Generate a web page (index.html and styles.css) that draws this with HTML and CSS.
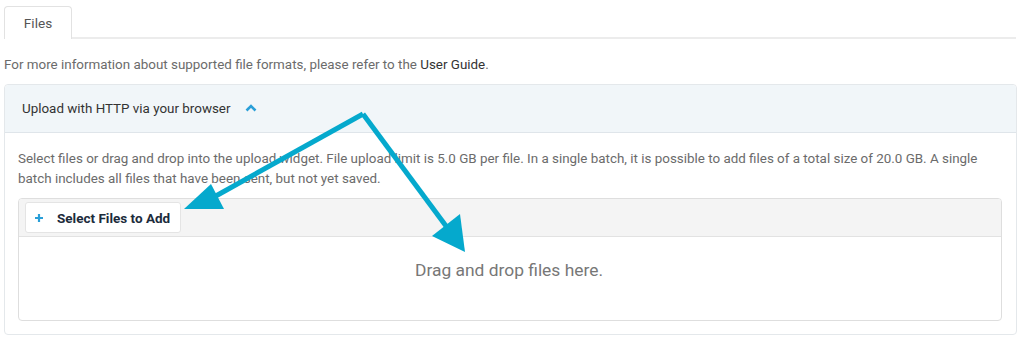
FILE: index.html
```html
<!DOCTYPE html>
<html lang="en">
    <head>
        <meta charset="UTF-8">
        <meta name="viewport" content="width=device-width, initial-scale=1.0">
        <title>Files</title>
        <link rel="stylesheet" href="styles.css">
    </head>
    <body>

        <!-- Tabs -->
        <ul class="tabs">
            <li class="tab active">Files</li>
        </ul>

        <p class="info">For more information about supported file formats, please refer to the <a href="#" class="guide-link">User Guide</a>.</p>

        <!-- Upload panel -->
        <div class="panel">
            <div class="panel-header">
                <span>Upload with HTTP via your browser</span>
                <svg class="chevron" width="12" height="8" viewBox="0 0 12 8">
                    <path d="M1.5 6.5 L6 2 L10.5 6.5" fill="none" stroke="#2a9fd8" stroke-width="2.6"/>
                </svg>
            </div>
            <div class="panel-body">
                <p class="hint">Select files or drag and drop into the upload widget. File upload limit is 5.0 GB per file. In a single batch, it is possible to add files of a total size of 20.0 GB. A single batch includes all files that have been sent, but not yet saved.</p>

                <div class="uploader">
                    <div class="toolbar">
                        <button class="add-btn">
                            <svg class="plus" width="8" height="8" viewBox="0 0 8 8">
                                <path d="M4 0 V8 M0 4 H8" stroke="#2a9fd8" stroke-width="2.2"/>
                            </svg>
                            Select Files to Add
                        </button>
                    </div>
                    <div class="dropzone">Drag and drop files here.</div>
                </div>
            </div>
        </div>

        <!-- Annotation arrows -->
        <svg class="arrows" width="1024" height="347" viewBox="0 0 1024 347">
            <line x1="363" y1="114" x2="214" y2="197" stroke="#05a9cd" stroke-width="5"/>
            <polygon points="184,209 211,184 224,209" fill="#05a9cd"/>
            <line x1="363" y1="114" x2="446" y2="226" stroke="#05a9cd" stroke-width="5"/>
            <polygon points="465,252 432,236 460,214" fill="#05a9cd"/>
        </svg>

    </body>
</html>
```

FILE: styles.css
```css
body {
    font-family: Roboto, "Liberation Sans", sans-serif;
    font-size: 13.4px;
    color: #6b6b6b;
    background-color: #fff;
    margin: 0;
    padding: 6px 7px 0 4px;
    position: relative;
}

.tabs {
    list-style: none;
    margin: 0;
    padding: 0;
    display: flex;
    border-bottom: 2px solid #ececec;
    margin-right: 1px;
}

.tab {
    width: 66px;
    height: 30px;
    line-height: 32px;
    text-align: center;
    font-size: 13.6px;
    color: #555;
    border: 1px solid #e2e2e2;
    border-bottom: none;
    border-radius: 4px 4px 0 0;
    background-color: #fff;
    margin-bottom: -2px;
    padding-bottom: 2px;
}

.info {
    margin: 16px 0 9px;
    line-height: 20px;
}

.guide-link {
    color: #333;
    text-decoration: none;
}

.panel {
    border: 1px solid #e4e8eb;
    border-radius: 4px;
    background-color: #fff;
}

.panel-header {
    height: 47px;
    display: flex;
    align-items: center;
    gap: 14px;
    padding: 0 17px;
    background-color: #f1f6f9;
    border-bottom: 1px solid #dfe5ea;
    border-radius: 4px 4px 0 0;
    color: #333;
}

.chevron {
    margin-top: -1px;
}

.panel-body {
    padding: 16px 14px 13px 13px;
}

.hint {
    margin: 0 0 9px;
    line-height: 20px;
}

.uploader {
    border: 1px solid #dedede;
    border-radius: 4px;
    overflow: hidden;
}

.toolbar {
    background-color: #f4f4f4;
    padding: 3px 6px 3px;
    height: 31px;
}

.add-btn {
    display: flex;
    align-items: center;
    gap: 14px;
    font-family: Roboto, "Liberation Sans", sans-serif;
    font-size: 13.5px;
    font-weight: bold;
    color: #1c2b3b;
    background-color: #fff;
    border: 1px solid #e4e4e4;
    border-radius: 3px;
    height: 31px;
    width: 156px;
    padding: 0 0 0 9px;
    cursor: pointer;
}

.plus {
    flex-shrink: 0;
}

.dropzone {
    height: 84px;
    box-sizing: border-box;
    padding: 21px 2px 0 0;
    border-top: 1px solid #e2e2e2;
    text-align: center;
    font-size: 17.4px;
    line-height: 24px;
    color: #777;
}

.arrows {
    position: absolute;
    top: 0;
    left: 0;
    pointer-events: none;
}
```
